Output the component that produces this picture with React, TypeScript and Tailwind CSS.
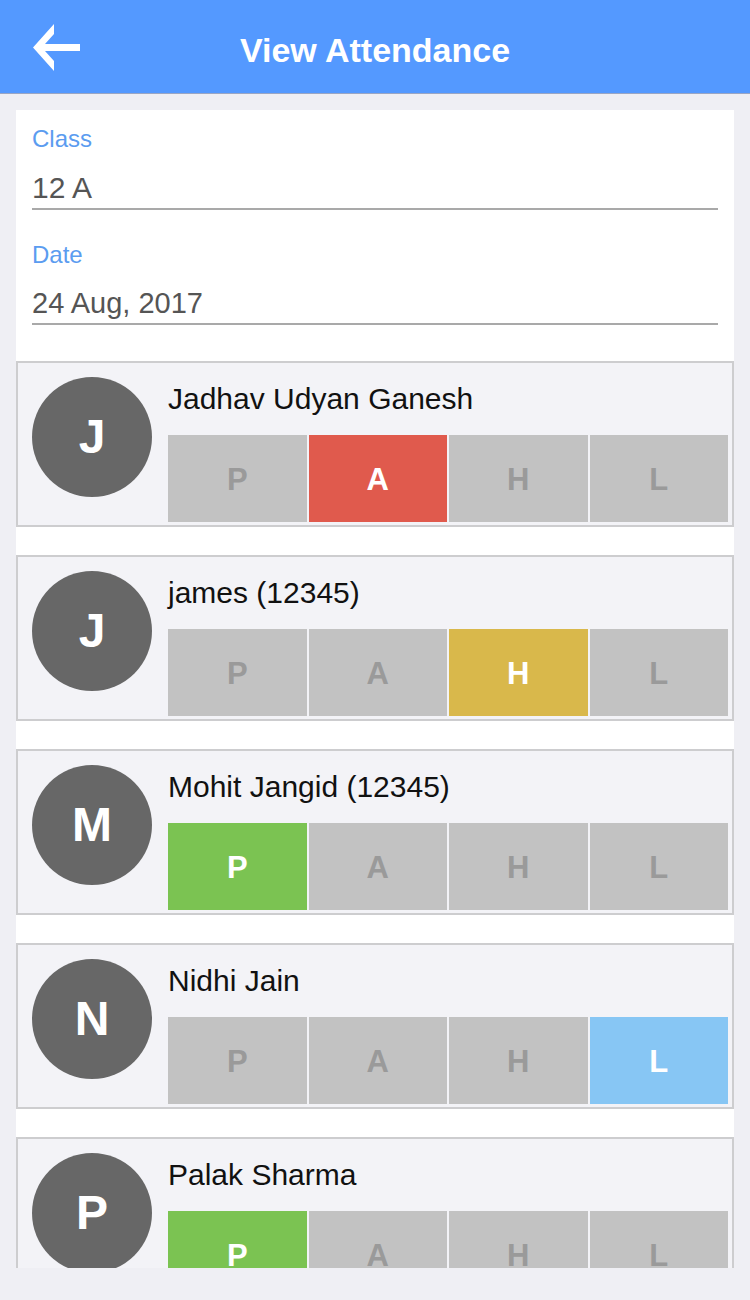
import React from "react";

type Status = "P" | "A" | "H" | "L";

const students: { name: string; initial: string; status: Status }[] = [
  { name: "Jadhav Udyan Ganesh", initial: "J", status: "A" },
  { name: "james (12345)", initial: "J", status: "H" },
  { name: "Mohit Jangid (12345)", initial: "M", status: "P" },
  { name: "Nidhi Jain", initial: "N", status: "L" },
  { name: "Palak Sharma", initial: "P", status: "P" },
];

const activeBg: Record<Status, string> = {
  P: "bg-[#7bc352] text-white",
  A: "bg-[#e05a4d] text-white",
  H: "bg-[#d9b84b] text-white",
  L: "bg-[#87c6f4] text-white",
};

function StudentCard({ name, initial, status }: { name: string; initial: string; status: Status }) {
  const opts: Status[] = ["P", "A", "H", "L"];
  return (
    <div className="flex border-2 border-[#cdcdcf] bg-[#f3f3f7] mb-[28px] shrink-0">
      <div className="ml-[14px] mt-[14px] w-[120px] h-[120px] rounded-full bg-[#676767] flex items-center justify-center text-white font-bold text-[48px] leading-none shrink-0">
        {initial}
      </div>
      <div className="flex-1 ml-[16px] mr-[4px] flex flex-col">
        <div className="pt-[20px] h-[52px] text-[30px] leading-[32px] text-[#111]">{name}</div>
        <div className="mt-[20px] mb-[3px] flex gap-[2px] h-[87px]">
          {opts.map((o) => (
            <div
              key={o}
              className={`flex-1 flex items-center justify-center pt-[4px] font-bold text-[31px] ${
                o === status ? activeBg[o] : "bg-[#c2c2c2] text-[#9a9a9a]"
              }`}
            >
              {o}
            </div>
          ))}
        </div>
      </div>
    </div>
  );
}

export default function App() {
  return (
    <div
      className="w-[750px] h-[1300px] bg-[#efeff4] flex flex-col overflow-hidden"
      style={{ fontFamily: '"Liberation Sans", Arial, sans-serif' }}
    >
      <div className="h-[94px] shrink-0 bg-[#5499ff] relative flex items-center justify-center border-b border-[#9aa6c4]">
        <svg className="absolute left-0 top-0" width="100" height="94" viewBox="0 0 100 94">
          <polygon
            points="54,24 54,34 45,44 80,44 80,51 45,51 54,61 54,71 33,47.5"
            fill="#ffffff"
          />
        </svg>
        <div className="text-white font-bold text-[34px] leading-none pt-[6px]">View Attendance</div>
      </div>
      <div className="flex-1 mx-[16px] mt-[16px] mb-[32px] bg-white overflow-hidden flex flex-col">
        <div className="px-[16px] pt-[15px]">
          <div className="text-[24px] leading-[28px] text-[#5b9cf0]">Class</div>
          <div className="mt-[18px] text-[30px] leading-[34px] text-[#555555] pb-[3px] border-b-2 border-[#a9a9a9]">
            12 A
          </div>
          <div className="mt-[31px] text-[24px] leading-[28px] text-[#5b9cf0]">Date</div>
          <div className="mt-[17px] text-[29px] leading-[34px] text-[#555555] pb-[3px] border-b-2 border-[#a9a9a9]">
            24 Aug, 2017
          </div>
        </div>
        <div className="mt-[36px] flex flex-col">
          {students.map((s, i) => (
            <StudentCard key={i} {...s} />
          ))}
        </div>
      </div>
    </div>
  );
}
